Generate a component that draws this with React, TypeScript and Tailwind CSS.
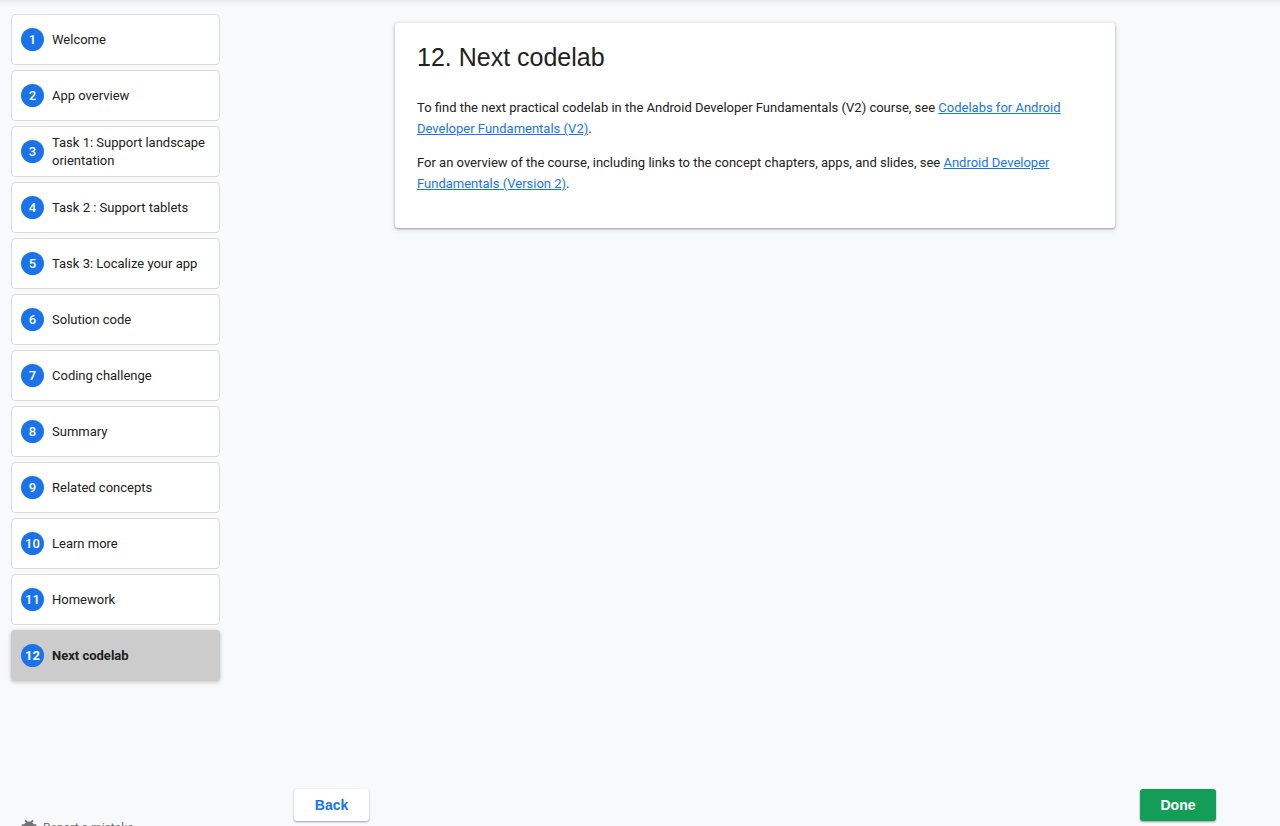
const steps = [
  'Welcome',
  'App overview',
  'Task 1: Support landscape orientation',
  'Task 2 : Support tablets',
  'Task 3: Localize your app',
  'Solution code',
  'Coding challenge',
  'Summary',
  'Related concepts',
  'Learn more',
  'Homework',
  'Next codelab',
];

const current = steps.length - 1;

function BugIcon() {
  return (
    <svg viewBox="0 0 24 24" className="size-[22px] shrink-0" fill="currentColor" aria-hidden="true">
      <path d="M20 8h-2.81c-.45-.78-1.07-1.45-1.82-1.96L17 4.41 15.59 3l-2.17 2.17C12.96 5.06 12.49 5 12 5c-.49 0-.96.06-1.41.17L8.41 3 7 4.41l1.62 1.63C7.88 6.55 7.26 7.22 6.81 8H4v2h2.09c-.05.33-.09.66-.09 1v1H4v2h2v1c0 .34.04.67.09 1H4v2h2.81c1.04 1.79 2.97 3 5.19 3s4.15-1.21 5.19-3H20v-2h-2.09c.05-.33.09-.66.09-1v-1h2v-2h-2v-1c0-.34-.04-.67-.09-1H20V8zm-6 8h-4v-2h4v2zm0-4h-4v-2h4v2z" />
    </svg>
  );
}

function Step({ title, index }: { title: string; index: number }) {
  const selected = index === current;
  return (
    <li>
      <a
        href={`#${index}`}
        aria-current={selected ? 'step' : undefined}
        className={`flex h-[51px] items-center gap-2 rounded-[4px] border px-[9px] text-[13px] leading-[18px] ${
          selected
            ? 'border-[#ccc] bg-[#ccc] font-bold shadow-[0_1px_3px_1px_rgba(60,64,67,0.2)]'
            : 'border-[#dadce0] bg-white'
        }`}
      >
        <span
          className={`flex size-[23px] shrink-0 items-center justify-center rounded-full bg-[#1a73e8] text-white ${
            selected ? 'font-bold' : 'font-medium'
          }`}
        >
          {index + 1}
        </span>
        <span>{title}</span>
      </a>
    </li>
  );
}

export default function App() {
  return (
    <div className="flex h-screen overflow-hidden bg-[#f8f9fb] font-['Roboto',sans-serif] text-[#212121] shadow-[inset_0_8px_6px_-6px_rgba(0,0,0,0.08)]">
      <aside className="flex w-[230px] shrink-0 flex-col">
        <nav aria-label="Steps" className="pt-[14px] pr-[10px] pl-[11px]">
          <ol className="flex flex-col gap-[5px]">
            {steps.map((title, index) => (
              <Step key={title} title={title} index={index} />
            ))}
          </ol>
        </nav>
        <a
          href="#report"
          className="mt-auto -mb-[13px] flex shrink-0 items-center gap-[3px] pl-[18px] text-[12px] leading-5 text-[#757575]"
        >
          <BugIcon />
          Report a mistake
        </a>
      </aside>
      <main className="flex min-w-0 flex-1 flex-col px-16">
        <article className="mx-auto mt-[23px] w-full max-w-[720px] rounded-[3px] bg-white px-[22px] pt-[18px] pb-[34px] text-[13px] leading-[21px] shadow-[0_1px_2px_rgba(60,64,67,0.4),0_1px_4px_1px_rgba(60,64,67,0.15)]">
          <h1 className="mb-[23px] font-['Liberation_Sans',sans-serif] text-[25px] leading-[33px]">
            12. Next codelab
          </h1>
          <p className="mb-[13px]">
            To find the next practical codelab in the Android Developer Fundamentals (V2) course, see{' '}
            <a href="#codelabs" className="text-[#1a73e8] underline">
              Codelabs for Android Developer Fundamentals (V2)
            </a>
            .
          </p>
          <p>
            For an overview of the course, including links to the concept chapters, apps, and slides, see{' '}
            <a href="#course" className="text-[#1a73e8] underline">
              Android Developer Fundamentals (Version 2)
            </a>
            .
          </p>
        </article>
        <div className="mt-auto mb-[5px] flex justify-between font-['Liberation_Sans',sans-serif] text-[14px] font-bold">
          <button
            type="button"
            className="h-8 w-[75px] rounded-[3px] bg-white text-[#1a73e8] shadow-[0_1px_2px_rgba(60,64,67,0.5)]"
          >
            Back
          </button>
          <button
            type="button"
            className="h-8 w-[76px] rounded-[3px] bg-[#129d58] text-white shadow-[0_1px_2px_rgba(60,64,67,0.5)]"
          >
            Done
          </button>
        </div>
      </main>
    </div>
  );
}
